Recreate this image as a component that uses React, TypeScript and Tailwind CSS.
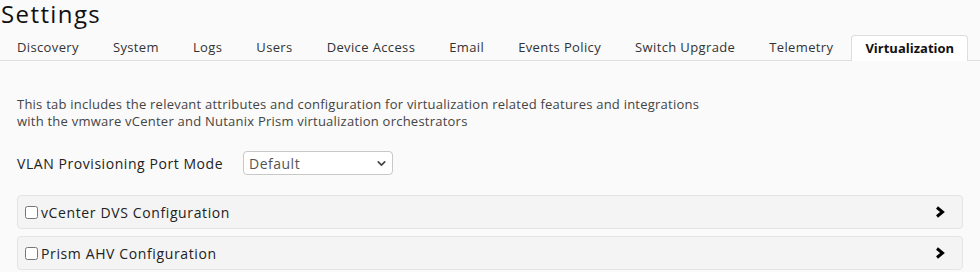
import { ChevronDown } from 'lucide-react';

const tabs = [
  'Discovery',
  'System',
  'Logs',
  'Users',
  'Device Access',
  'Email',
  'Events Policy',
  'Switch Upgrade',
  'Telemetry',
  'Virtualization',
];

function Chevron() {
  return (
    <svg width="12" height="14" viewBox="0 0 12 14" className="text-black">
      <polyline points="3,2.5 8.5,7 3,11.5" fill="none" stroke="currentColor" strokeWidth="3" />
    </svg>
  );
}

function Section({ title }: { title: string }) {
  return (
    <div className="flex h-[34px] items-center rounded border border-[#e4e4e4] bg-[#f4f4f4] pl-[7px] pr-[16px]">
      <input type="checkbox" className="m-0 h-[13px] w-[13px]" />
      <span className="ml-[3px] text-[14px] tracking-[0.62px] text-[#222]">{title}</span>
      <span className="ml-auto">
        <Chevron />
      </span>
    </div>
  );
}

export default function App() {
  const active = 'Virtualization';

  return (
    <div className="h-[272px] w-[980px] overflow-hidden bg-[#fafafa] font-['Open_Sans',sans-serif] text-[#333]">
      {/* Header */}
      <h1 className="pl-[1px] pt-px text-[24px] leading-[26px] tracking-[1.4px] text-[#111]">Settings</h1>

      {/* Tabs */}
      <div className="mt-[8px] flex border-b border-[#dedede]">
        {tabs.map((t) =>
          t === active ? (
            <div
              key={t}
              className="-mb-px ml-[1px] flex h-[26px] items-center rounded-t border border-b-0 border-[#dedede] bg-white px-[13px] text-[13px] font-bold text-[#111]"
            >
              {t}
            </div>
          ) : (
            <div key={t} className="flex h-[25px] items-center px-[17px] text-[13px] tracking-[0.37px] text-[#333]">
              {t}
            </div>
          )
        )}
      </div>

      {/* Content */}
      <div className="px-[17px]">
        <p className="mt-[35px] text-[13px] leading-[17px] tracking-[0.23px] text-[#444]">
          This tab includes the relevant attributes and configuration for virtualization related features and integrations
          <br />
          with the vmware vCenter and Nutanix Prism virtualization orchestrators
        </p>

        <div className="mt-[21px] flex items-center">
          <span className="w-[226px] text-[14px] tracking-[0.56px] text-[#222]">VLAN Provisioning Port Mode</span>
          <div className="relative flex h-[24px] w-[150px] items-center rounded border border-[#c8c8c8] bg-white pl-[5px] text-[14px] tracking-[0.5px] text-[#555]">
            Default
            <ChevronDown className="absolute right-[4px] top-[5px] h-[13px] w-[13px] text-[#444]" strokeWidth={3} />
          </div>
        </div>

        <div className="mt-[20px] flex w-[946px] flex-col gap-[7px]">
          <Section title="vCenter DVS Configuration" />
          <Section title="Prism AHV Configuration" />
        </div>
      </div>
    </div>
  );
}
